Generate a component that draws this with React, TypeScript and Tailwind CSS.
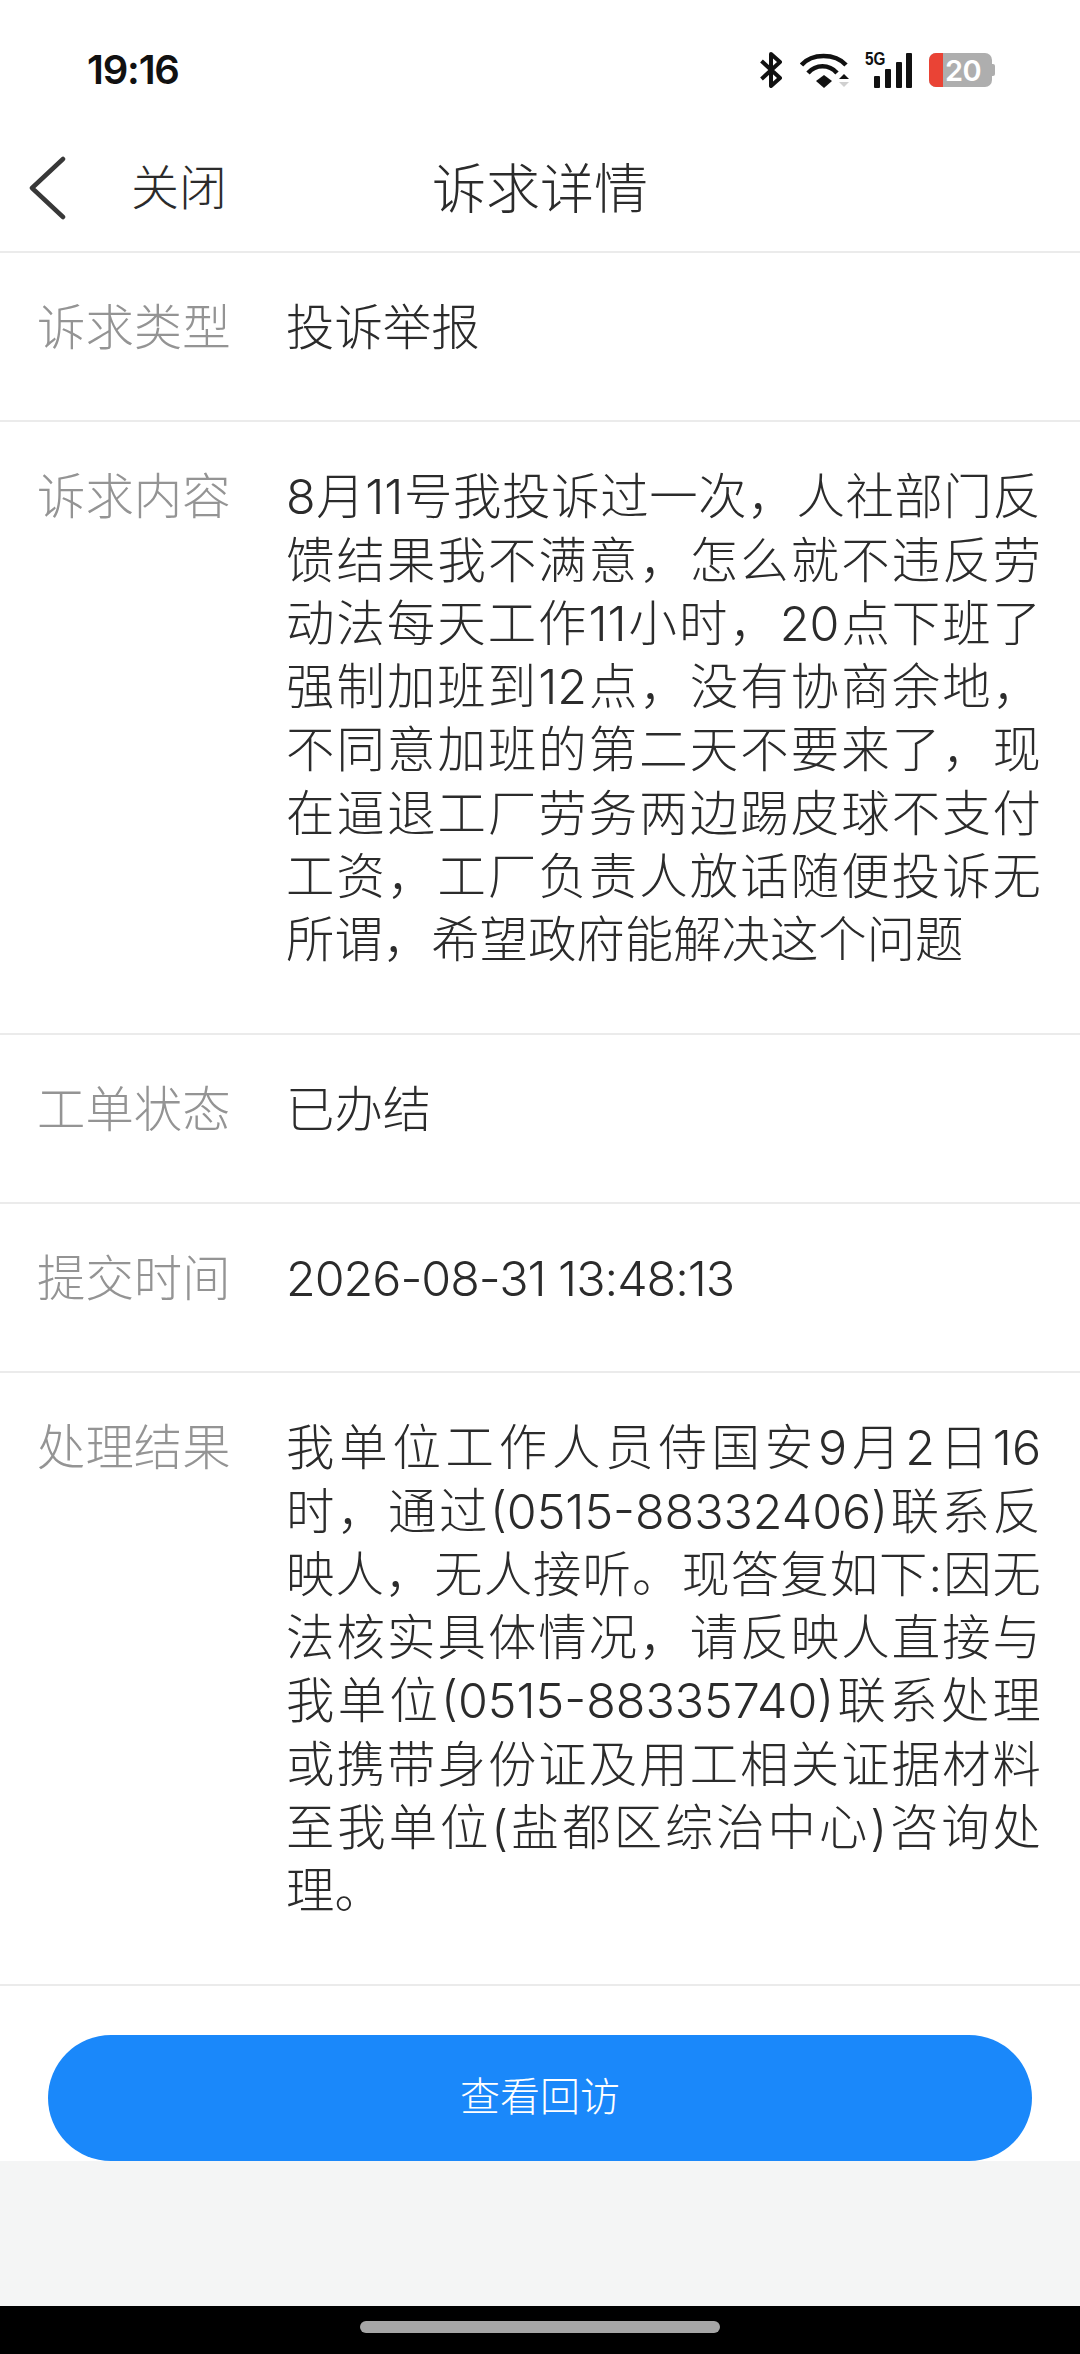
const FONT = "font-['Inter','Noto_Sans_CJK_SC','Noto_Sans',sans-serif]";

function Row({ label, lines, tight }: { label: string; lines: string[]; tight?: boolean }) {
  return (
    <div className="flex border-b-2 border-[#ebebeb] pb-[61px] pl-[37px] pr-[39px] pt-[43px]">
      <div className="w-[249px] shrink-0 text-[48.4px] font-light leading-[63.3px] text-[#949494]">{label}</div>
      <div className={`flex-1 text-[48.4px] font-light leading-[63.3px] text-[#2b2b2b] ${tight ? "tracking-[-1px]" : ""}`}>
        {lines.map((l, i) => (
          <div key={i} className={i < lines.length - 1 ? "whitespace-nowrap [text-align-last:justify]" : "whitespace-nowrap"}>
            {l}
          </div>
        ))}
      </div>
    </div>
  );
}

function StatusIcons() {
  return (
    <div className="flex items-center">
      <svg width="22" height="36" viewBox="0 0 22 36" fill="none" stroke="#111" strokeWidth="4" strokeLinejoin="round">
        <path d="M1.5 9 L20 26 L11 34 V2 L20 10 L1.5 27" />
      </svg>
      <svg className="ml-[18px]" width="49" height="36" viewBox="0 0 49 36" fill="none">
        <path d="M1.5 13 C12 1 35 1 46 13" stroke="#111" strokeWidth="4.5" />
        <path d="M8 21 C16 12 29 12 37 21" stroke="#111" strokeWidth="4.5" />
        <path d="M24 23 L32 29 L24 36 L16 29 Z" fill="#111" />
        <path d="M44 22 L49 27 H39 Z" fill="#111" />
        <path d="M39 30 H49 L44 35 Z" fill="#d0d0d0" />
      </svg>
      <div className="relative ml-[16px] h-[36px] w-[47px]">
        <span className="absolute left-0 top-[-2px] origin-left font-['Liberation_Sans',sans-serif] text-[18px] font-bold leading-[18px] text-[#111] [transform:scaleX(0.85)]">5G</span>
        <div className="absolute bottom-0 left-[9px] h-[12px] w-[6px] rounded-[1px] bg-[#111]" />
        <div className="absolute bottom-0 left-[20px] h-[19px] w-[6px] rounded-[1px] bg-[#111]" />
        <div className="absolute bottom-0 left-[31px] h-[26px] w-[6px] rounded-[1px] bg-[#111]" />
        <div className="absolute bottom-0 left-[41px] h-[35px] w-[6px] rounded-[1px] bg-[#111]" />
      </div>
      <div className="relative ml-[17px] flex h-[34px] w-[63px] items-center overflow-hidden rounded-[7px] bg-[#aeaeae]">
        <div className="h-full w-[14px] bg-[#ea4335]" />
        <span className="ml-[2px] font-['Inter',sans-serif] text-[29px] font-semibold leading-none tracking-[-0.5px] text-white">20</span>
      </div>
      <div className="h-[12px] w-[3px] rounded-r-[2px] bg-[#aeaeae]" />
    </div>
  );
}

export default function App() {
  return (
    <div className={`flex h-[2354px] w-[1080px] flex-col overflow-hidden bg-white ${FONT}`}>
      <div className="flex h-[130px] items-center justify-between pl-[87px] pr-[85px] pt-[10px]">
        <span className="font-['Inter',sans-serif] text-[40px] font-semibold tracking-[-1.2px] text-[#111]">19:16</span>
        <StatusIcons />
      </div>
      <div className="relative flex h-[123px] items-center justify-center border-b-2 border-[#ebebeb] pb-[1px]">
        <div className="absolute left-[28px] top-[26px] flex items-center">
          <svg width="40" height="64" viewBox="0 0 40 64" fill="none" stroke="#383838" strokeWidth="4.5" strokeLinecap="round" strokeLinejoin="round">
            <path d="M35 3 L4 32 L35 61" />
          </svg>
          <span className="relative ml-[63px] text-[48px] font-light leading-[64px] text-[#2b2b2b]">关闭</span>
        </div>
        <span className="text-[54px] font-light leading-[64px] text-[#2b2b2b]">诉求详情</span>
      </div>
      <Row label="诉求类型" lines={["投诉举报"]} />
      <Row
        label="诉求内容"
        lines={[
          "8月11号我投诉过一次，人社部门反",
          "馈结果我不满意，怎么就不违反劳",
          "动法每天工作11小时，20点下班了",
          "强制加班到12点，没有协商余地，",
          "不同意加班的第二天不要来了，现",
          "在逼退工厂劳务两边踢皮球不支付",
          "工资，工厂负责人放话随便投诉无",
          "所谓，希望政府能解决这个问题",
        ]}
      />
      <Row label="工单状态" lines={["已办结"]} />
      <Row label="提交时间" lines={["2026-08-31 13:48:13"]} tight />
      <Row
        label="处理结果"
        lines={[
          "我单位工作人员侍国安9月2日16",
          "时，通过(0515-88332406)联系反",
          "映人，无人接听。现答复如下:因无",
          "法核实具体情况，请反映人直接与",
          "我单位(0515-88335740)联系处理",
          "或携带身份证及用工相关证据材料",
          "至我单位(盐都区综治中心)咨询处",
          "理。",
        ]}
      />
      <div className="flex h-[175px] shrink-0 items-end bg-white px-[48px]">
        <div className="flex h-[126px] w-full items-center justify-center rounded-full bg-[#1a88fa] pb-[2px] text-[40px] font-light text-white">查看回访</div>
      </div>
      <div className="flex-1 bg-[#f4f5f5]" />
      <div className="flex h-[48px] shrink-0 justify-center bg-black pt-[15px]">
        <div className="h-[12px] w-[360px] rounded-full bg-[#a6a6a6]" />
      </div>
    </div>
  );
}
